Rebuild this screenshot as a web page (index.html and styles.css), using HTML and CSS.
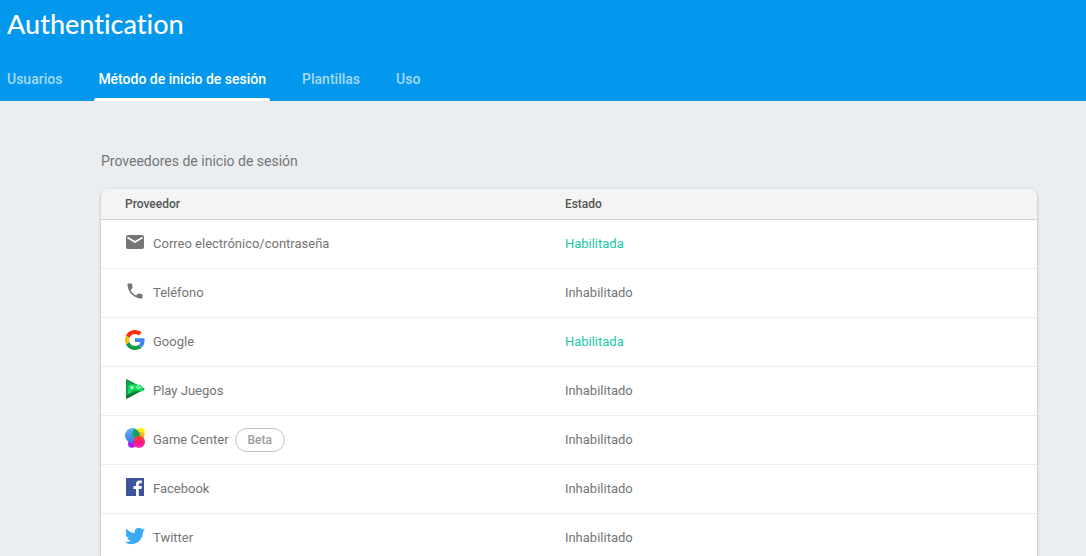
FILE: index.html
```html
<!DOCTYPE html>
<html lang="es">
<head>
<meta charset="utf-8">
<meta name="viewport" content="width=device-width, initial-scale=1">
<title>Authentication</title>
<link rel="stylesheet" href="styles.css">
</head>
<body>
<header class="header">
  <h1 class="title">Authentication</h1>
  <nav class="tabs">
    <a class="tab" href="#usuarios">Usuarios</a>
    <a class="tab active" href="#metodo" aria-current="page">Método de inicio de sesión</a>
    <a class="tab" href="#plantillas">Plantillas</a>
    <a class="tab" href="#uso">Uso</a>
  </nav>
</header>
<main class="content">
  <h2 class="section-title">Proveedores de inicio de sesión</h2>
  <div class="card">
    <table class="providers">
      <thead><tr><th scope="col" class="name-col">Proveedor</th><th scope="col">Estado</th></tr></thead>
      <tbody>
        <tr>
          <td><div class="provider"><svg class="icon" viewBox="0 0 20 20" aria-hidden="true"><path fill="#757575" d="M3 3h14a2 2 0 0 1 2 2v10a2 2 0 0 1-2 2H3a2 2 0 0 1-2-2V5a2 2 0 0 1 2-2z"/><path fill="none" stroke="#fff" stroke-width="1.8" d="M2.5 5.4 10 10l7.500-4.600"/></svg><span>Correo electrónico/contraseña</span></div></td>
          <td class="enabled">Habilitada</td>
        </tr>
        <tr>
          <td><div class="provider"><svg class="icon" viewBox="0 0 24 24" aria-hidden="true"><path fill="#757575" d="M6.620 10.790c1.440 2.830 3.760 5.140 6.590 6.590l2.200-2.200c.27-.27.67-.36 1.020-.24 1.120.37 2.330.57 3.570.57.55 0 1 .45 1 1V20c0 .55-.45 1-1 1C10.610 21 3 13.390 3 4c0-.55.45-1 1-1h3.500c.55 0 1 .45 1 1 0 1.250.2 2.450.57 3.570.11.35.03.74-.25 1.020l-2.200 2.200z"/></svg><span>Teléfono</span></div></td>
          <td>Inhabilitado</td>
        </tr>
        <tr>
          <td><div class="provider"><svg class="icon" viewBox="0 0 48 48" aria-hidden="true"><path fill="#ff2d0b" d="M24 9.500c3.540 0 6.710 1.220 9.210 3.600l6.850-6.850C35.900 2.380 30.470 0 24 0 14.620 0 6.510 5.380 2.560 13.220l7.980 6.190C12.430 13.720 17.740 9.500 24 9.500z"/><path fill="#4285f4" d="M46.980 24.550c0-1.570-.15-3.090-.38-4.550H24v9.020h12.940c-.58 2.960-2.260 5.480-4.780 7.180l7.730 6c4.510-4.180 7.090-10.360 7.090-17.650z"/><path fill="#fbbc05" d="M10.530 28.590A14.500 14.500 0 0 1 9.770 24c0-1.600.27-3.140.76-4.590l-7.980-6.190A24 24 0 0 0 0 24c0 3.880.92 7.540 2.560 10.780l7.970-6.190z"/><path fill="#0f9d46" d="M24 48c6.480 0 11.930-2.130 15.890-5.810l-7.730-6c-2.150 1.450-4.920 2.300-8.160 2.300-6.260 0-11.570-4.220-13.470-9.910l-7.980 6.190C6.510 42.620 14.620 48 24 48z"/></svg><span>Google</span></div></td>
          <td class="enabled">Habilitada</td>
        </tr>
        <tr>
          <td><div class="provider"><svg class="icon" viewBox="0 0 20 20" aria-hidden="true"><path fill="#087b36" d="M1 .6q0-.7.8-.3L19.300 9.400q.7.600 0 1.100L1.900 19.700q-.9.400-.9-.5z"/><path fill="#0baa45" d="M1.500 1 18.800 10l-2 1.500L5 14.500l-3.500 2z"/><path fill="#12de63" d="M3.600 7Q5 4.800 7.500 5.600l5 .1q2.700-.8 4 1l2 4.300q.2 2-1.700 1.500l-3-1.800-6 .5-3 3.600q-2 1-1.900-1.200z"/><path stroke="#c4fbd6" stroke-width="1.300" d="M5.100 8.500h3.600M6.900 6.700v3.600"/><circle cx="13.500" cy="7" r=".8" fill="#caffdc"/><circle cx="13.500" cy="9.800" r=".8" fill="#caffdc"/><circle cx="12.100" cy="8.400" r=".8" fill="#caffdc"/><circle cx="14.900" cy="8.400" r=".8" fill="#caffdc"/></svg><span>Play Juegos</span></div></td>
          <td>Inhabilitado</td>
        </tr>
        <tr>
          <td><div class="provider"><svg class="icon" viewBox="0 0 20 20" aria-hidden="true"><defs><linearGradient id="blue" x2="0" y2="1"><stop stop-color="#61b8fa"/><stop offset="1" stop-color="#3678ed"/></linearGradient><linearGradient id="pink" x2="0" y2="1"><stop stop-color="#fb5355"/><stop offset=".5" stop-color="#ff147a"/><stop offset="1" stop-color="#ff35ac"/></linearGradient></defs><circle cx="15.500" cy="4.500" r="4.500" fill="#fff200"/><circle cx="15.800" cy="7.500" r="3.500" fill="#f5b51c"/><circle cx="7" cy="15.800" r="4" fill="#a51cff"/><circle cx="7.500" cy="7.500" r="7.500" fill="url(#blue)"/><path fill="#18a35a" d="M9.500 .8a7.500 7.500 0 0 1 4.800 9.700Q8.500 10.500 7.500 7 7 3 9.500 .8z"/><circle cx="14" cy="14" r="6" fill="url(#pink)"/><path fill="#f63b32" d="M9.200 10.500q4.800-4.500 9.600 0-4.800 2.500-9.600 0z"/></svg><span>Game Center</span><span class="badge">Beta</span></div></td>
          <td>Inhabilitado</td>
        </tr>
        <tr>
          <td><div class="provider"><svg class="icon" viewBox="0 0 20 20" aria-hidden="true"><path fill="#3b549b" d="M1 1h18v18H1z"/><path fill="#fff" d="M11 19v-7H8.500V9H11V7.200Q11 3.600 14.500 3.600h2.300v2.700h-1.600q-1.400 0-1.400 1.300V9h3l-.4 3h-2.600v7z"/></svg><span>Facebook</span></div></td>
          <td>Inhabilitado</td>
        </tr>
        <tr>
          <td><div class="provider"><svg class="icon" viewBox="0 0 24 24" aria-hidden="true"><path fill="#3ba9f5" d="M23.950 4.570a10 10 0 0 1-2.820.77 4.960 4.960 0 0 0 2.160-2.720c-.95.550-2 .96-3.130 1.180a4.920 4.920 0 0 0-8.380 4.480C7.690 8.100 4.070 6.130 1.640 3.160a4.820 4.820 0 0 0-.67 2.480c0 1.710.87 3.210 2.190 4.100a4.900 4.900 0 0 1-2.230-.62v.06a4.920 4.920 0 0 0 3.950 4.830 5 5 0 0 1-2.210.08 4.940 4.940 0 0 0 4.600 3.420A9.870 9.870 0 0 1 0 19.540a13.990 13.990 0 0 0 7.550 2.210c9.050 0 14-7.500 14-13.980 0-.21 0-.42-.02-.63a9.940 9.940 0 0 0 2.460-2.550z"/></svg><span>Twitter</span></div></td>
          <td>Inhabilitado</td>
        </tr>
      </tbody>
    </table>
  </div>
</main>
</body>
</html>
```

FILE: styles.css
```css
* { box-sizing: border-box; }

body {
  margin: 0;
  height: 100vh;
  display: flex;
  flex-direction: column;
  background: #eaeef1;
  color: #757575;
  font: 13px/20px Roboto, sans-serif;
}

.header {
  flex: none;
  background: #0398ee;
  color: #fff;
}

.title {
  margin: 0;
  padding: 8px 7px 0;
  font: 500 27px/32px Lato, sans-serif;
  font-variant-ligatures: none;
}

.tabs {
  display: flex;
  gap: 28px;
  padding: 18px 3px 0;
}

.tab {
  padding: 11px 4px 9px;
  border-bottom: 3px solid transparent;
  color: rgba(255, 255, 255, .65);
  font-size: 14px;
  font-weight: 500;
  text-decoration: none;
  position: relative;
}

.tab.active { color: #fff; }

.tab.active::after {
  content: "";
  position: absolute;
  inset: auto 0 -3px;
  height: 3px;
  border-radius: 2px 2px 0 0;
  background: #fff;
}

.content {
  flex: 1;
  min-height: 0;
  overflow: auto;
  scrollbar-width: none;
  padding: 50px 49px 24px 101px;
}

.section-title {
  margin: 0 0 18px;
  font-size: 14px;
  font-weight: 400;
  line-height: 20px;
}

.card {
  overflow: hidden;
  border-radius: 8px;
  background: #fff;
  box-shadow: 0 1px 3px rgba(0, 0, 0, .3);
}

.providers {
  width: 100%;
  border-collapse: separate;
  border-spacing: 0;
  table-layout: fixed;
}

.providers th {
  height: 31px;
  padding: 0 24px;
  border-bottom: 1px solid #d5d5d5;
  background: #f4f4f4;
  color: #555;
  font-size: 12px;
  font-weight: 500;
  text-align: left;
}

.providers .name-col { width: 47%; }

.providers td {
  height: 49px;
  padding: 0 24px;
  border-bottom: 1px solid #ededed;
}

.providers .enabled { color: #1ccaa8; }

.provider {
  display: flex;
  align-items: center;
}

.icon {
  width: 20px;
  height: 20px;
  margin: 0 8px 4px 0;
}

.badge {
  margin-left: 6px;
  padding: 1px 12px;
  border: 1px solid #c4c4c4;
  border-radius: 12px;
  color: #9e9e9e;
  font-size: 12px;
  font-weight: 500;
}
```
